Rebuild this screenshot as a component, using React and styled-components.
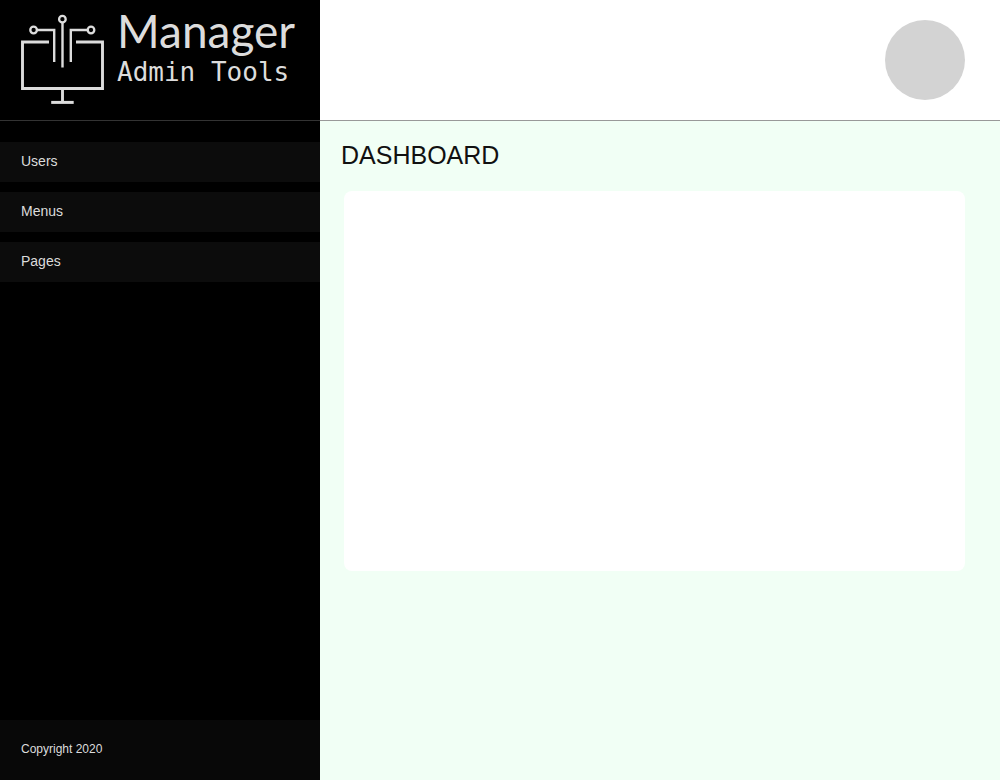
import React from 'react';
import styled, { createGlobalStyle } from 'styled-components';

const GlobalStyle = createGlobalStyle`
  *, *::before, *::after { box-sizing: border-box; }
  body {
    margin: 0;
    font-family: "Liberation Sans", Arial, sans-serif;
    background: #f1fff5;
  }
`;

const Layout = styled.div`
  display: grid;
  grid-template-columns: 320px 1fr;
  min-height: 100vh;
`;

const Sidebar = styled.aside`
  display: flex;
  flex-direction: column;
  background: #000;
  color: #dcdcdc;
`;

const Brand = styled.div`
  display: flex;
  gap: 12px;
  height: 121px;
  padding: 12px 20px;
  border-bottom: 1px solid #333;
`;

const Logo = styled.svg`
  flex: none;
  width: 85px;
  height: 94px;
`;

const BrandText = styled.div`
  display: flex;
  flex-direction: column;
  white-space: nowrap;
`;

const BrandName = styled.span`
  font-family: Lato, sans-serif;
  font-size: 46px;
  line-height: 38px;
`;

const BrandTagline = styled.span`
  font-family: "DejaVu Sans Mono", monospace;
  font-size: 26px;
  line-height: 44px;
`;

const Nav = styled.nav`
  display: flex;
  flex: 1;
  flex-direction: column;
  gap: 10px;
  padding: 21px 0;
`;

const NavLink = styled.a`
  padding: 0 21px 2px;
  background: #0c0c0c;
  color: inherit;
  font-size: 14px;
  line-height: 38px;
  text-decoration: none;
`;

const Copyright = styled.footer`
  padding: 0 21px 2px;
  background: #080808;
  font-size: 12px;
  line-height: 58px;
`;

const Content = styled.div`
  display: flex;
  flex-direction: column;
  min-width: 0;
`;

const TopBar = styled.header`
  display: flex;
  align-items: center;
  justify-content: flex-end;
  height: 121px;
  padding: 0 35px;
  background: #fff;
  border-bottom: 1px solid #999;
`;

const Avatar = styled.button`
  width: 80px;
  height: 80px;
  padding: 0;
  border: 0;
  border-radius: 50%;
  background: #d3d3d3;
`;

const Main = styled.main`
  display: flex;
  flex-direction: column;
  gap: 22px;
  padding: 20px 35px 20px 21px;
`;

const Title = styled.h1`
  margin: 0;
  color: #111;
  font-size: 25px;
  font-weight: 400;
  line-height: 28px;
`;

const Panel = styled.section`
  min-height: 380px;
  margin-left: 3px;
  border-radius: 8px;
  background: #fff;
`;

const LINKS = ['Users', 'Menus', 'Pages'];

export default function App() {
  return (
    <>
      <GlobalStyle />
      <Layout>
        <Sidebar>
          <Brand>
            <Logo viewBox="20 12 85 94" fill="none" stroke="#dcdcdc" aria-hidden="true">
              <path d="M49 42H22.5V88.5H102.5V42H76" strokeWidth="2.9" />
              <path d="M62.5 89V102" strokeWidth="2.9" />
              <path d="M51.2 102.4H73.7" strokeWidth="3" />
              <path d="M37 30H54.2V62M88 30H70.8V62M62.5 22V67.5" strokeWidth="2.4" />
              <circle cx="62.4" cy="19.2" r="3.3" strokeWidth="2.3" />
              <circle cx="33.6" cy="30" r="3.3" strokeWidth="2.3" />
              <circle cx="91" cy="30" r="3.3" strokeWidth="2.3" />
            </Logo>
            <BrandText>
              <BrandName>Manager</BrandName>
              <BrandTagline>Admin Tools</BrandTagline>
            </BrandText>
          </Brand>
          <Nav aria-label="Main">
            {LINKS.map((label) => (
              <NavLink key={label} href={`#${label.toLowerCase()}`}>{label}</NavLink>
            ))}
          </Nav>
          <Copyright>Copyright 2020</Copyright>
        </Sidebar>
        <Content>
          <TopBar>
            <Avatar type="button" aria-label="Account" />
          </TopBar>
          <Main>
            <Title>DASHBOARD</Title>
            <Panel aria-label="Dashboard content" />
          </Main>
        </Content>
      </Layout>
    </>
  );
}
